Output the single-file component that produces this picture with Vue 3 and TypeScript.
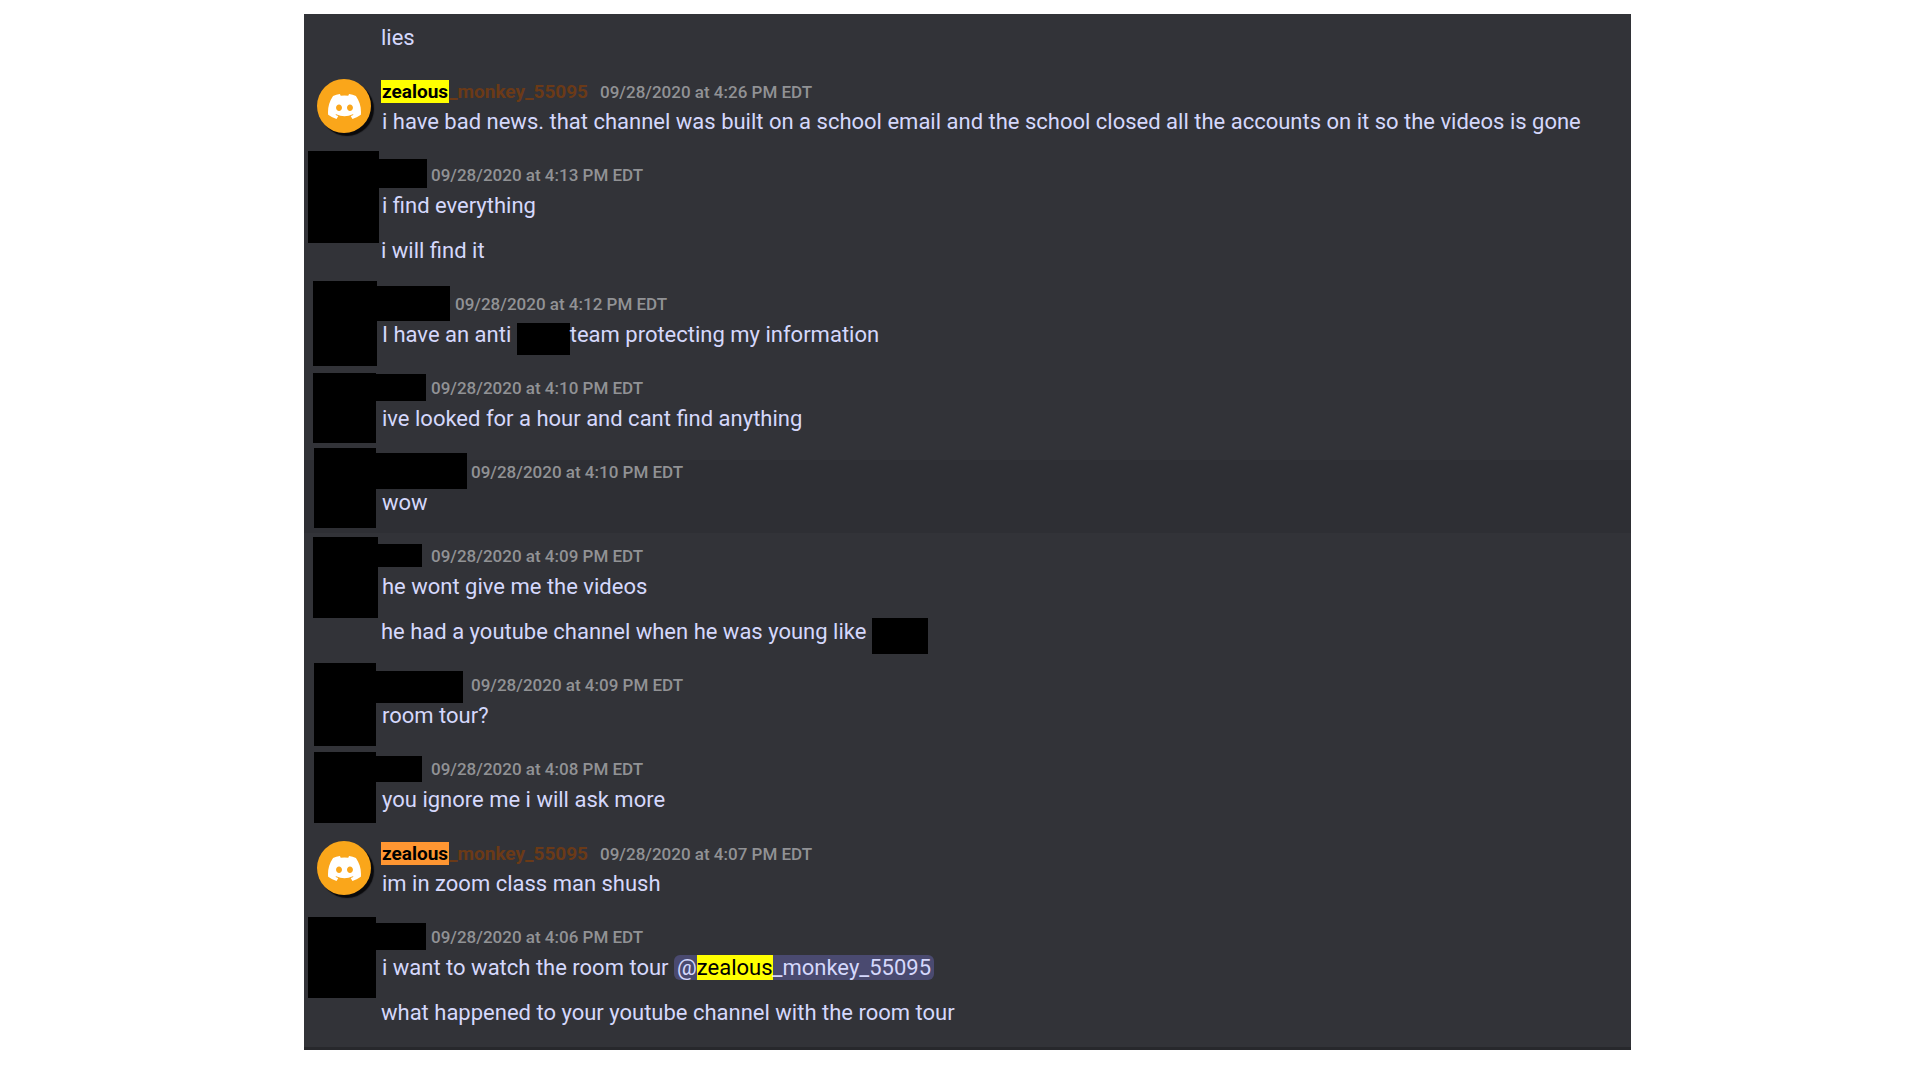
<script setup lang="ts">
type Tone = 'yellow' | 'orange'

interface Part {
  text?: string
  mention?: { head: string; tail: string }
  cover?: { width: number; height: number; drop: number }
}

interface Box {
  left: number
  top: number
  width: number
  height: number
}

interface Message {
  id: number
  time?: string
  tone?: Tone
  nameWidth?: number
  covers?: Box[]
  hovered?: boolean
  lines: Part[][]
}

const box = (left: number, top: number, width: number, height: number): Box => ({ left, top, width, height })

const messages: Message[] = [
  { id: 1, lines: [[{ text: 'lies' }]] },
  {
    id: 2,
    time: '4:26',
    tone: 'yellow',
    lines: [[{ text: 'i have bad news. that channel was built on a school email and the school closed all the accounts on it so the videos is gone' }]],
  },
  {
    id: 3,
    time: '4:13',
    nameWidth: 38,
    covers: [box(4, -12, 71, 92), box(75, -4, 48, 29)],
    lines: [[{ text: 'i find everything' }], [{ text: 'i will find it' }]],
  },
  {
    id: 4,
    time: '4:12',
    nameWidth: 62,
    covers: [box(9, -11, 64, 85), box(73, -6, 73, 35)],
    lines: [[{ text: 'I have an anti ' }, { cover: { width: 53, height: 32, drop: 13 } }, { text: 'team protecting my information' }]],
  },
  {
    id: 5,
    time: '4:10',
    nameWidth: 38,
    covers: [box(9, -3, 63, 70), box(72, -2, 50, 27)],
    lines: [[{ text: 'ive looked for a hour and cant find anything' }]],
  },
  {
    id: 6,
    time: '4:10',
    nameWidth: 78,
    hovered: true,
    covers: [box(10, -12, 62, 80), box(72, -7, 91, 36)],
    lines: [[{ text: 'wow' }]],
  },
  {
    id: 7,
    time: '4:09',
    nameWidth: 38,
    covers: [box(9, -7, 65, 81), box(74, 0, 44, 23)],
    lines: [
      [{ text: 'he wont give me the videos' }],
      [{ text: 'he had a youtube channel when he was young like ' }, { cover: { width: 56, height: 36, drop: 15 } }],
    ],
  },
  {
    id: 8,
    time: '4:09',
    nameWidth: 78,
    covers: [box(10, -10, 62, 83), box(72, -2, 87, 32)],
    lines: [[{ text: 'room tour?' }]],
  },
  {
    id: 9,
    time: '4:08',
    nameWidth: 38,
    covers: [box(10, -5, 62, 71), box(72, -1, 46, 26)],
    lines: [[{ text: 'you ignore me i will ask more' }]],
  },
  { id: 10, time: '4:07', tone: 'orange', lines: [[{ text: 'im in zoom class man shush' }]] },
  {
    id: 11,
    time: '4:06',
    nameWidth: 38,
    covers: [box(4, -8, 68, 81), box(72, -2, 50, 27)],
    lines: [
      [{ text: 'i want to watch the room tour ' }, { mention: { head: 'zealous', tail: '_monkey_55095' } }],
      [{ text: 'what happened to your youtube channel with the room tour' }],
    ],
  },
]

const boxStyle = (b: Box) => ({
  left: `${b.left}px`,
  top: `${b.top}px`,
  width: `${b.width}px`,
  height: `${b.height}px`,
})

const coverStyle = (c: { width: number; height: number; drop: number }) => ({
  width: `${c.width}px`,
  height: `${c.height}px`,
  marginBottom: `${-c.drop}px`,
})
</script>

<template>
  <main class="chat">
    <article v-for="m in messages" :key="m.id" class="message" :class="{ hovered: m.hovered }">
      <div class="gutter">
        <div v-if="m.tone" class="avatar">
          <svg class="logo" viewBox="0 0 127.14 96.36" aria-hidden="true">
            <path
              fill="#fff"
              d="M107.7,8.07A105.15,105.15,0,0,0,81.47,0a72.06,72.06,0,0,0-3.36,6.83A97.68,97.68,0,0,0,49,6.83,72.37,72.37,0,0,0,45.64,0,105.89,105.89,0,0,0,19.39,8.09C2.79,32.65-1.71,56.6.54,80.21h0A105.73,105.73,0,0,0,32.71,96.36,77.7,77.7,0,0,0,39.6,85.25a68.42,68.42,0,0,1-10.85-5.18c.91-.66,1.8-1.34,2.66-2a75.57,75.57,0,0,0,64.32,0c.87.71,1.76,1.39,2.66,2a68.68,68.68,0,0,1-10.87,5.19,77,77,0,0,0,6.89,11.1A105.25,105.25,0,0,0,126.6,80.22h0C129.24,52.84,122.09,29.11,107.7,8.07ZM42.45,65.69C36.18,65.69,31,60,31,53s5-12.74,11.43-12.74S54,46,53.89,53,48.84,65.69,42.45,65.69Zm42.24,0C78.41,65.69,73.25,60,73.25,53s5-12.74,11.44-12.74S96.23,46,96.12,53,91.08,65.69,84.69,65.69Z"
            />
          </svg>
        </div>
      </div>
      <div class="content">
        <header v-if="m.time" class="head">
          <span v-if="m.tone" class="name"><mark :class="m.tone">zealous</mark>_monkey_55095</span>
          <span v-else class="name" :style="{ width: `${m.nameWidth}px` }"></span>
          <time class="time">09/28/2020 at {{ m.time }} PM EDT</time>
        </header>
        <p v-for="(line, i) in m.lines" :key="i" class="line"><template v-for="(part, j) in line" :key="j"><a v-if="part.mention" href="#" class="mention">@<mark class="yellow">{{ part.mention.head }}</mark>{{ part.mention.tail }}</a><span v-else-if="part.cover" class="cover" :style="coverStyle(part.cover)"></span><template v-else>{{ part.text }}</template></template></p>
      </div>
      <div v-for="(b, i) in m.covers" :key="i" class="redaction" :style="boxStyle(b)"></div>
    </article>
  </main>
</template>

<style>
body {
  background: #fff;
}
</style>

<style scoped>
.chat {
  display: flex;
  flex-direction: column;
  gap: 11px;
  margin: 14px 289px 30px 304px;
  padding: 9px 0 4px;
  border-bottom: 3px solid #27282c;
  background: #323338;
  color: #d5d8fc;
  font-family: Roboto, "Liberation Sans", sans-serif;
  font-size: 22px;
}

.message {
  position: relative;
  display: flex;
}

.hovered {
  background: #2e2f34;
}

.gutter {
  flex: none;
  width: 77px;
  padding-left: 13px;
  box-sizing: border-box;
}

.avatar {
  display: flex;
  align-items: center;
  justify-content: center;
  width: 54px;
  height: 54px;
  border-radius: 50%;
  background: #faa61a;
  box-shadow: 3px 3px 1px #0a0a0c;
}

.logo {
  width: 33px;
  height: 25px;
}

.content {
  flex: 1;
  min-width: 0;
  padding-bottom: 15px;
}

.head {
  display: flex;
  align-items: baseline;
  gap: 12px;
  height: 25px;
  margin-bottom: 3px;
  line-height: 25px;
}

.name {
  color: #6b3a17;
  font-size: 19px;
  font-weight: 700;
}

.time {
  color: #919295;
  font-size: 17px;
  font-weight: 500;
}

.line {
  margin: 0;
  line-height: 30px;
  white-space: pre-wrap;
}

.head + .line {
  padding-left: 1px;
}

.line + .line {
  margin-top: 15px;
}

mark {
  color: #000;
}

.name mark {
  padding: 0 1px;
}

.yellow {
  background: #ff0;
}

.orange {
  background: #ff9632;
}

.mention {
  padding: 0 3px;
  border-radius: 6px;
  background: #4a4a70;
  color: #d5d8fc;
  text-decoration: none;
}

.cover {
  display: inline-block;
  background: #000;
}

.redaction {
  position: absolute;
  background: #000;
}
</style>
